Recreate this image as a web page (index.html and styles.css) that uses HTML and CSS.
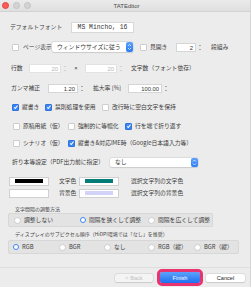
FILE: index.html
```html
<!DOCTYPE html>
<html lang="ja">

<head>
    <meta charset="UTF-8">
    <meta name="viewport" content="width=device-width, initial-scale=1.0">
    <title>TATEditor</title>
    <link rel="stylesheet" href="styles.css">
</head>

<body>
    <div class="window">
        <div class="titlebar">
            <div class="lights">
                <span class="light red"></span>
                <span class="light"></span>
                <span class="light"></span>
            </div>
            <div class="title">TATEditor</div>
        </div>

        <div class="content">
            <!-- default font -->
            <div class="row row1">
                <span class="label w-font">デフォルトフォント</span>
                <span class="fontbox">MS Mincho, 16</span>
            </div>

            <!-- page view -->
            <div class="row row2">
                <span class="cb ml2"></span>
                <span class="label ml4 w-page">ページ表示</span>
                <span class="popup popup-page">
                    <span class="popup-text">ウィンドウサイズに従う</span>
                    <span class="popup-arrow"><svg viewBox="0 0 7 9"><path d="M2 3.5 L3.5 2 L5 3.5 M2 5.5 L3.5 7 L5 5.5" /></svg></span>
                </span>
                <span class="cb ml7"></span>
                <span class="label ml3 w-spread">見開き</span>
                <span class="field w-num">2</span>
                <svg class="stepper" viewBox="0 0 4 9"><path d="M1 3 L2 2 L3 3 M1 6 L2 7 L3 6" /></svg>
                <span class="label ml9">段組み</span>
            </div>

            <!-- lines x chars -->
            <div class="row row3">
                <span class="label ml1 w-lines">行数</span>
                <span class="field disabled w-lines-field">20</span>
                <svg class="stepper faint" viewBox="0 0 4 9"><path d="M1 3 L2 2 L3 3 M1 6 L2 7 L3 6" /></svg>
                <span class="label times">×</span>
                <span class="field disabled w-lines-field">20</span>
                <svg class="stepper faint" viewBox="0 0 4 9"><path d="M1 3 L2 2 L3 3 M1 6 L2 7 L3 6" /></svg>
                <span class="label ml8">文字数（フォント依存）</span>
            </div>

            <!-- gamma / zoom -->
            <div class="row row4">
                <span class="label ml1 w-gamma">ガンマ補正</span>
                <span class="field w-gamma-field">1.20</span>
                <svg class="stepper" viewBox="0 0 4 9"><path d="M1 3 L2 2 L3 3 M1 6 L2 7 L3 6" /></svg>
                <span class="label ml9 w-zoom">拡大率 [%]</span>
                <span class="field w-zoom-field">100.00</span>
                <svg class="stepper" viewBox="0 0 4 9"><path d="M1 3 L2 2 L3 3 M1 6 L2 7 L3 6" /></svg>
            </div>

            <!-- checkboxes -->
            <div class="row row5">
                <span class="check ml2 w-c33"><span class="cb on"></span><span class="label">縦書き</span></span>
                <span class="check w-c57"><span class="cb on"></span><span class="label">禁則処理を使用</span></span>
                <span class="check"><span class="cb"></span><span class="label">改行時に空白文字を保持</span></span>
            </div>

            <div class="row row6">
                <span class="check ml3 w-c55"><span class="cb"></span><span class="label">原稿用紙（仮）</span></span>
                <span class="check w-c57"><span class="cb"></span><span class="label">強制的に等幅化</span></span>
                <span class="check"><span class="cb on"></span><span class="label">行を端で折り返す</span></span>
            </div>

            <div class="row row7">
                <span class="check ml3 w-c55"><span class="cb"></span><span class="label">シナリオ（仮）</span></span>
                <span class="check"><span class="cb on"></span><span class="label">縦書き&amp;対応IME時（Google日本語入力等）</span></span>
            </div>

            <!-- booklet -->
            <div class="row row8">
                <span class="label ml2 w-booklet">折り本等設定（PDF出力前に指定）</span>
                <span class="popup popup-booklet">
                    <span class="popup-text">なし</span>
                    <span class="popup-arrow"><svg viewBox="0 0 7 9"><path d="M2 3.5 L3.5 2 L5 3.5 M2 5.5 L3.5 7 L5 5.5" /></svg></span>
                </span>
            </div>

            <!-- colours -->
            <div class="row row9">
                <span class="well ml-1"><span class="swatch black"></span></span>
                <span class="label ml10 w-color">文字色</span>
                <span class="well"><span class="swatch teal"></span></span>
                <span class="label ml12">選択文字列の文字色</span>
            </div>

            <div class="row row10">
                <span class="well ml-1"><span class="swatch white"></span></span>
                <span class="label ml10 w-color">背景色</span>
                <span class="well"><span class="swatch lavender"></span></span>
                <span class="label ml12">選択文字列の背景色</span>
            </div>

            <!-- spacing group -->
            <div class="group-label gl1">文字間隔の調整方法</div>
            <div class="group box1">
                <span class="radio-item w-r66"><span class="radio"></span><span class="label">調整しない</span></span>
                <span class="radio-item w-r68"><span class="radio on"></span><span class="label">間隔を狭くして調整</span></span>
                <span class="radio-item"><span class="radio"></span><span class="label">間隔を広くして調整</span></span>
            </div>

            <!-- subpixel group -->
            <div class="group-label gl2">ディスプレイのサブピクセル順序（HiDPI環境では「なし」を推奨）</div>
            <div class="group box2">
                <span class="radio-item w-r46"><span class="radio on"></span><span class="label">RGB</span></span>
                <span class="radio-item w-r45"><span class="radio"></span><span class="label">BGR</span></span>
                <span class="radio-item w-r44"><span class="radio"></span><span class="label">なし</span></span>
                <span class="radio-item w-r46"><span class="radio"></span><span class="label">RGB（縦）</span></span>
                <span class="radio-item"><span class="radio"></span><span class="label">BGR（縦）</span></span>
            </div>
        </div>

        <div class="separator"></div>

        <div class="buttons">
            <button class="btn back" disabled>&lt; Back</button>
            <button class="btn finish">Finish</button>
            <button class="btn cancel">Cancel</button>
        </div>
    </div>
</body>

</html>
```

FILE: styles.css
```css
body {
    margin: 0;
    padding: 0;
    background-color: #ffffff;
    font-family: "Noto Sans CJK JP", "Noto Sans", sans-serif;
}

.window {
    width: 250px;
    height: 287px;
    background-color: #ececec;
    border-right: 1px solid #d6d6d6;
    position: relative;
}

.titlebar {
    height: 11px;
    background: linear-gradient(#ebebeb, #dfdfdf);
    border-bottom: 1px solid #d2d2d2;
    display: flex;
    align-items: center;
    position: relative;
}

.lights {
    display: flex;
    gap: 4px;
    padding-left: 2px;
}

.light {
    width: 5px;
    height: 5px;
    border-radius: 50%;
    background-color: #d3d3d3;
    border: 0.5px solid #c4c4c4;
}

.light.red {
    background-color: #fc5b57;
    border-color: #e0443e;
}

.title {
    flex: 1;
    text-align: center;
    font-family: "Liberation Sans", Arial, sans-serif;
    font-size: 6px;
    color: #4a4a4a;
    margin-right: 28px;
}

.content {
    padding-left: 10px;
}

.row {
    display: flex;
    align-items: center;
    height: 10px;
}

.row1 { margin-top: 10px; }
.row2 { margin-top: 10px; }
.row3 { margin-top: 11px; }
.row4 { margin-top: 10px; }
.row5 { margin-top: 9px; }
.row6 { margin-top: 9px; }
.row7 { margin-top: 7px; }
.row8 { margin-top: 9px; }
.row9 { margin-top: 9px; }
.row10 { margin-top: 2px; }

.label {
    font-size: 5.8px;
    line-height: 10px;
    color: #3c3c3c;
    white-space: nowrap;
    flex: none;
}

.ml-1 { margin-left: -1px; }
.ml1 { margin-left: 1px; }
.ml2 { margin-left: 2px; }
.ml3 { margin-left: 3px; }
.ml4 { margin-left: 4px; }
.ml7 { margin-left: 7px; }
.ml8 { margin-left: 8px; }
.ml9 { margin-left: 9px; }
.ml10 { margin-left: 10px; }
.ml12 { margin-left: 12px; }

.w-font { width: 61px; }
.w-page { width: 29px; }
.w-spread { width: 20px; }
.w-lines { width: 18px; }
.w-gamma { width: 37px; }
.w-zoom { width: 35px; }
.w-booklet { width: 98px; }
.w-color { width: 20px; }

.fontbox {
    width: 61px;
    height: 9px;
    background-color: #ffffff;
    border: 0.5px solid #d8d8d8;
    font-family: "Liberation Mono", "Noto Sans CJK JP", monospace;
    font-size: 6.4px;
    line-height: 9px;
    text-align: center;
    color: #333333;
}

/* popups */
.popup {
    display: flex;
    align-items: center;
    background-color: #ffffff;
    border-radius: 2px;
    box-shadow: 0 0 0 0.5px #cfcfcf, 0 0.5px 1px rgba(0, 0, 0, 0.15);
    flex: none;
}

.popup-page {
    width: 81px;
    height: 10px;
}

.popup-booklet {
    width: 88px;
    height: 9px;
    margin-left: 0;
}

.popup-text {
    flex: 1;
    padding-left: 5px;
    font-size: 5.8px;
    line-height: 10px;
    color: #333333;
    white-space: nowrap;
}

.popup-arrow {
    width: 7px;
    height: 100%;
    background: linear-gradient(#5ea1fb, #2a7cf3);
    border-radius: 2px;
    display: flex;
}

.popup-arrow svg {
    width: 7px;
    height: 100%;
}

.popup-arrow path {
    fill: none;
    stroke: #ffffff;
    stroke-width: 0.7;
}

/* number fields */
.field {
    height: 9px;
    background-color: #ffffff;
    border: 0.5px solid #d6d6d6;
    box-sizing: border-box;
    font-family: "Liberation Sans", Arial, sans-serif;
    font-size: 5.8px;
    line-height: 8px;
    text-align: right;
    padding-right: 2px;
    color: #333333;
    flex: none;
}

.field.disabled {
    color: #b4b4b4;
    border-color: #e2e2e2;
}

.w-num { width: 20px; margin-left: 6px; }
.w-lines-field { width: 32px; }
.w-gamma-field { width: 30px; }
.w-zoom-field { width: 34px; }

.stepper {
    width: 4px;
    height: 9px;
    margin-left: 2px;
    flex: none;
}

.stepper path {
    fill: none;
    stroke: #7a7a7a;
    stroke-width: 0.6;
}

.stepper.faint path {
    stroke: #c4c4c4;
}

.times {
    width: 18px;
    text-align: center;
    font-family: "Liberation Sans", Arial, sans-serif;
}

/* checkboxes */
.check {
    display: flex;
    align-items: center;
    gap: 3px;
    flex: none;
}

.w-c33 { width: 33px; }
.w-c55 { width: 55px; }
.w-c57 { width: 57px; }

.cb {
    width: 5px;
    height: 5px;
    background-color: #ffffff;
    border: 0.5px solid #cdcdcd;
    border-radius: 1px;
    flex: none;
    position: relative;
}

.cb.on {
    background-color: #3b87f5;
    border-color: #2f74de;
}

.cb.on::after {
    content: "";
    position: absolute;
    left: 1.6px;
    top: 0.4px;
    width: 1.2px;
    height: 2.6px;
    border-right: 0.8px solid #ffffff;
    border-bottom: 0.8px solid #ffffff;
    transform: rotate(40deg);
}

/* colour wells */
.well {
    width: 38px;
    height: 7px;
    background-color: #ffffff;
    border: 0.5px solid #d0d0d0;
    display: flex;
    align-items: center;
    justify-content: center;
    flex: none;
}

.swatch {
    width: 28px;
    height: 4px;
}

.swatch.black { background-color: #000000; }
.swatch.white { background-color: #ffffff; }
.swatch.teal { background-color: #047c78; }
.swatch.lavender { background-color: #d3d3fa; }

/* groups */
.group-label {
    font-size: 5px;
    line-height: 6px;
    color: #444444;
    padding-left: 5px;
    white-space: nowrap;
}

.gl1 { margin-top: 8px; }
.gl2 { margin-top: 4px; }

.group {
    display: flex;
    align-items: center;
    height: 14px;
    margin-left: -2px;
    padding-left: 5px;
    box-sizing: border-box;
    background-color: #e3e3e3;
    border: 0.5px solid #d7d7d7;
    border-radius: 2px;
}

.box1 {
    width: 205px;
    margin-top: 1px;
}

.box2 {
    width: 231px;
    margin-top: 3px;
    padding-left: 4px;
}

.radio-item {
    display: flex;
    align-items: center;
    gap: 3px;
    flex: none;
}

.w-r44 { width: 44px; }
.w-r45 { width: 45px; }
.w-r46 { width: 46px; }
.w-r66 { width: 66px; }
.w-r68 { width: 68px; }

.radio {
    width: 5px;
    height: 5px;
    border-radius: 50%;
    background-color: #ffffff;
    border: 0.5px solid #cdcdcd;
    flex: none;
    position: relative;
}

.radio.on {
    width: 4px;
    height: 4px;
    background-color: #ffffff;
    border: 1.5px solid #3b87f5;
}

.separator {
    margin-top: 13px;
    height: 1px;
    background-color: #dedede;
}

/* dialog buttons */
.buttons {
    display: flex;
    justify-content: flex-end;
    align-items: center;
    height: 19px;
    padding-right: 5px;
    gap: 6px;
}

.btn {
    height: 8px;
    padding: 0;
    border: none;
    border-radius: 2px;
    font-family: "Liberation Sans", Arial, sans-serif;
    font-size: 5.6px;
    line-height: 8px;
    background-color: #ffffff;
    box-shadow: 0 0 0 0.5px #cfcfcf, 0 0.5px 1px rgba(0, 0, 0, 0.15);
    color: #222222;
}

.back {
    width: 38px;
    color: #c2c2c2;
    background-color: #f4f4f4;
    margin-right: 1px;
}

.finish {
    width: 40px;
    height: 11px;
    color: #ffffff;
    background: linear-gradient(#5da2fb, #1e6ff1);
    outline: 3px solid #e8336f;
    outline-offset: 0;
}

.cancel {
    width: 39px;
}
```
